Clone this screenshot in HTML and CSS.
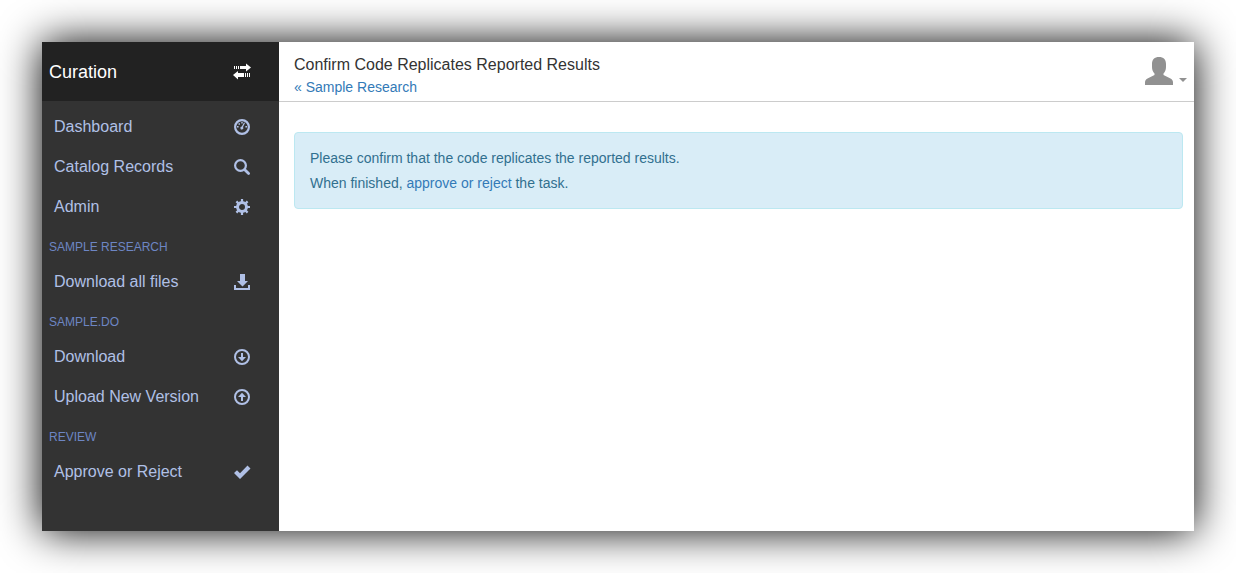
FILE: index.html
```html
<!DOCTYPE html>
<html lang="en">
<head>
<meta charset="utf-8">
<meta name="viewport" content="width=device-width, initial-scale=1">
<title>Confirm Code Replicates Reported Results</title>
<link rel="stylesheet" href="styles.css">
</head>
<body class="page">
<div class="app">
  <nav class="sidebar" aria-label="Main">
    <a class="brand" href="#">
      <span>Curation</span>
      <svg class="icon icon-wide" viewBox="0 0 18 16" aria-hidden="true"><path d="M1 2h1v3H1zM3 2h1v3H3zM5 2h1v3H5zM7 2h6V-.5L18 3.500l-5 4V5H7zM11 9v4H5v2.500l-5-4.500 5-4V9zM12 9h1v4h-1zM14 9h1v4h-1zM16 9h1v4h-1z"/></svg>
    </a>
    <ul class="menu">
      <li><a class="item" href="#"><span>Dashboard</span>
        <svg class="icon" viewBox="0 0 16 16" aria-hidden="true"><path fill-rule="evenodd" d="M8 0a8 8 0 1 1 0 16A8 8 0 0 1 8 0zm0 2.200a5.800 5.800 0 1 0 0 11.600A5.800 5.800 0 0 0 8 2.200z"/><path d="M10 3.500l1 .5-2 4a1.500 1.500 0 1 1-1.200-.5zM7.300 3h1.400v1.500H7.300zM4.500 4.300H6v1.400H4.500zM3 7h1.600v1.400H3zM11.400 7H13v1.400h-1.600z"/></svg></a></li>
      <li><a class="item" href="#"><span>Catalog Records</span>
        <svg class="icon" viewBox="0 0 16 16" aria-hidden="true"><g fill="none" stroke="currentColor"><circle cx="6.500" cy="6.500" r="5.400" stroke-width="2.200"/><path stroke-width="2.800" stroke-linecap="round" d="M11 11l3.600 3.600"/></g></svg></a></li>
      <li><a class="item" href="#"><span>Admin</span>
        <svg class="icon" viewBox="0 0 16 16" aria-hidden="true"><g stroke="currentColor" fill="none"><circle cx="8" cy="8" r="4.500" stroke-width="3"/><path stroke-width="2.200" d="M8 0v3M8 13v3M0 8h3M13 8h3M2.400 2.400l2.200 2.200M11.400 11.400l2.200 2.200M2.400 13.600l2.200-2.200M11.400 4.600l2.200-2.200"/></g></svg></a></li>
    </ul>
    <h2 class="group">Sample Research</h2>
    <ul class="menu">
      <li><a class="item" href="#"><span>Download all files</span>
        <svg class="icon icon-wide" viewBox="0 0 18 16" aria-hidden="true"><path d="M7 0h5v7h3l-5.500 5.500L4 7h3zM1 11h2v3h12v-3h2v5H1z"/></svg></a></li>
    </ul>
    <h2 class="group">Sample.do</h2>
    <ul class="menu">
      <li><a class="item" href="#"><span>Download</span>
        <svg class="icon" viewBox="0 0 16 16" aria-hidden="true"><circle cx="8" cy="8" r="7" fill="none" stroke="currentColor" stroke-width="2"/><path d="M7 4h2v4h3l-4 4.300L4 8h3z"/></svg></a></li>
      <li><a class="item" href="#"><span>Upload New Version</span>
        <svg class="icon" viewBox="0 0 16 16" aria-hidden="true"><circle cx="8" cy="8" r="7" fill="none" stroke="currentColor" stroke-width="2"/><path d="M7 12h2V8h3L8 3.700 4 8h3z"/></svg></a></li>
    </ul>
    <h2 class="group">Review</h2>
    <ul class="menu">
      <li><a class="item" href="#"><span>Approve or Reject</span>
        <svg class="icon icon-wide" viewBox="0 0 18 16" aria-hidden="true"><path d="M14.500 1.500l3 3L7 15 1 9l3-2.700 3 3z"/></svg></a></li>
    </ul>
  </nav>
  <div class="content">
    <header class="topbar">
      <div>
        <h1 class="title">Confirm Code Replicates Reported Results</h1>
        <a class="link back" href="#">« Sample Research</a>
      </div>
      <button class="account" type="button" aria-label="Account menu">
        <svg class="avatar" viewBox="0 0 28 28" aria-hidden="true"><path d="M14 0c4.500 0 7 2.500 7 7v3c0 3-1 5-2.500 6.500V18l7 3.500c1.800 1 2.500 2 2.500 4V28H0v-2.500c0-2 .7-3 2.500-4l7-3.500v-1.500C8 15 7 13 7 10V7c0-4.500 2.500-7 7-7z"/></svg>
        <span class="caret"></span>
      </button>
    </header>
    <main class="main">
      <div class="notice">
        <p class="line">Please confirm that the code replicates the reported results.</p>
        <p class="line">When finished, <a class="link" href="#">approve or reject</a> the task.</p>
      </div>
    </main>
  </div>
</div>
</body>
</html>
```

FILE: styles.css
```css
* {
  box-sizing: border-box;
}

.page {
  display: flex;
  min-height: 100vh;
  margin: 0;
  padding: 42px;
  background: #fff;
  color: #333;
  font: 14px/20px "Liberation Sans", Arial, sans-serif;
}

.app {
  display: flex;
  flex: 1;
  min-width: 0;
  background: #fff;
  box-shadow: 0 0 40px #000;
}

.sidebar {
  flex: none;
  width: 237px;
  background: #333;
  color: #b0c0e6;
}

.brand {
  display: flex;
  align-items: center;
  justify-content: space-between;
  height: 59px;
  padding: 0 28px 0 7px;
  background: #222;
  color: #fff;
  font-size: 18px;
  text-decoration: none;
}

.menu {
  margin: 0;
  padding: 0;
  list-style: none;
}

.brand + .menu {
  padding-top: 6px;
}

.item {
  display: flex;
  align-items: center;
  justify-content: space-between;
  height: 40px;
  padding: 0 28px 0 12px;
  color: inherit;
  font-size: 16px;
  text-decoration: none;
}

.icon {
  width: 16px;
  height: 16px;
  margin-right: 1px;
  overflow: visible;
  fill: currentColor;
}

.icon-wide {
  width: 18px;
  margin-right: 0;
}

.group {
  margin: 0;
  padding: 10px 7px 5px;
  color: #6d86c4;
  font-size: 12px;
  font-weight: 400;
  line-height: 20px;
  text-transform: uppercase;
}

.content {
  flex: 1;
  min-width: 0;
}

.topbar {
  display: flex;
  justify-content: space-between;
  padding: 11px 7px 4px 15px;
  border-bottom: 1px solid #ccc;
}

.title {
  margin: 0;
  font-size: 16px;
  font-weight: 400;
  line-height: 24px;
}

.link {
  color: #337ab7;
  text-decoration: none;
}

.back {
  display: block;
  line-height: 20px;
}

.account {
  display: flex;
  align-items: flex-end;
  gap: 6px;
  height: 32px;
  padding: 0 0 0;
  border: 0;
  background: none;
  color: #919191;
  cursor: pointer;
}

.avatar {
  width: 28px;
  height: 28px;
  fill: currentColor;
}

.caret {
  margin-bottom: 3px;
  border: 4px solid transparent;
  border-top-color: currentColor;
  border-bottom: 0;
}

.main {
  padding: 30px 11px 30px 15px;
}

.notice {
  display: grid;
  gap: 5px;
  padding: 15px;
  border: 1px solid #bce8f1;
  border-radius: 4px;
  background: #d9edf7;
  color: #31708f;
}

.line {
  margin: 0;
}
```
